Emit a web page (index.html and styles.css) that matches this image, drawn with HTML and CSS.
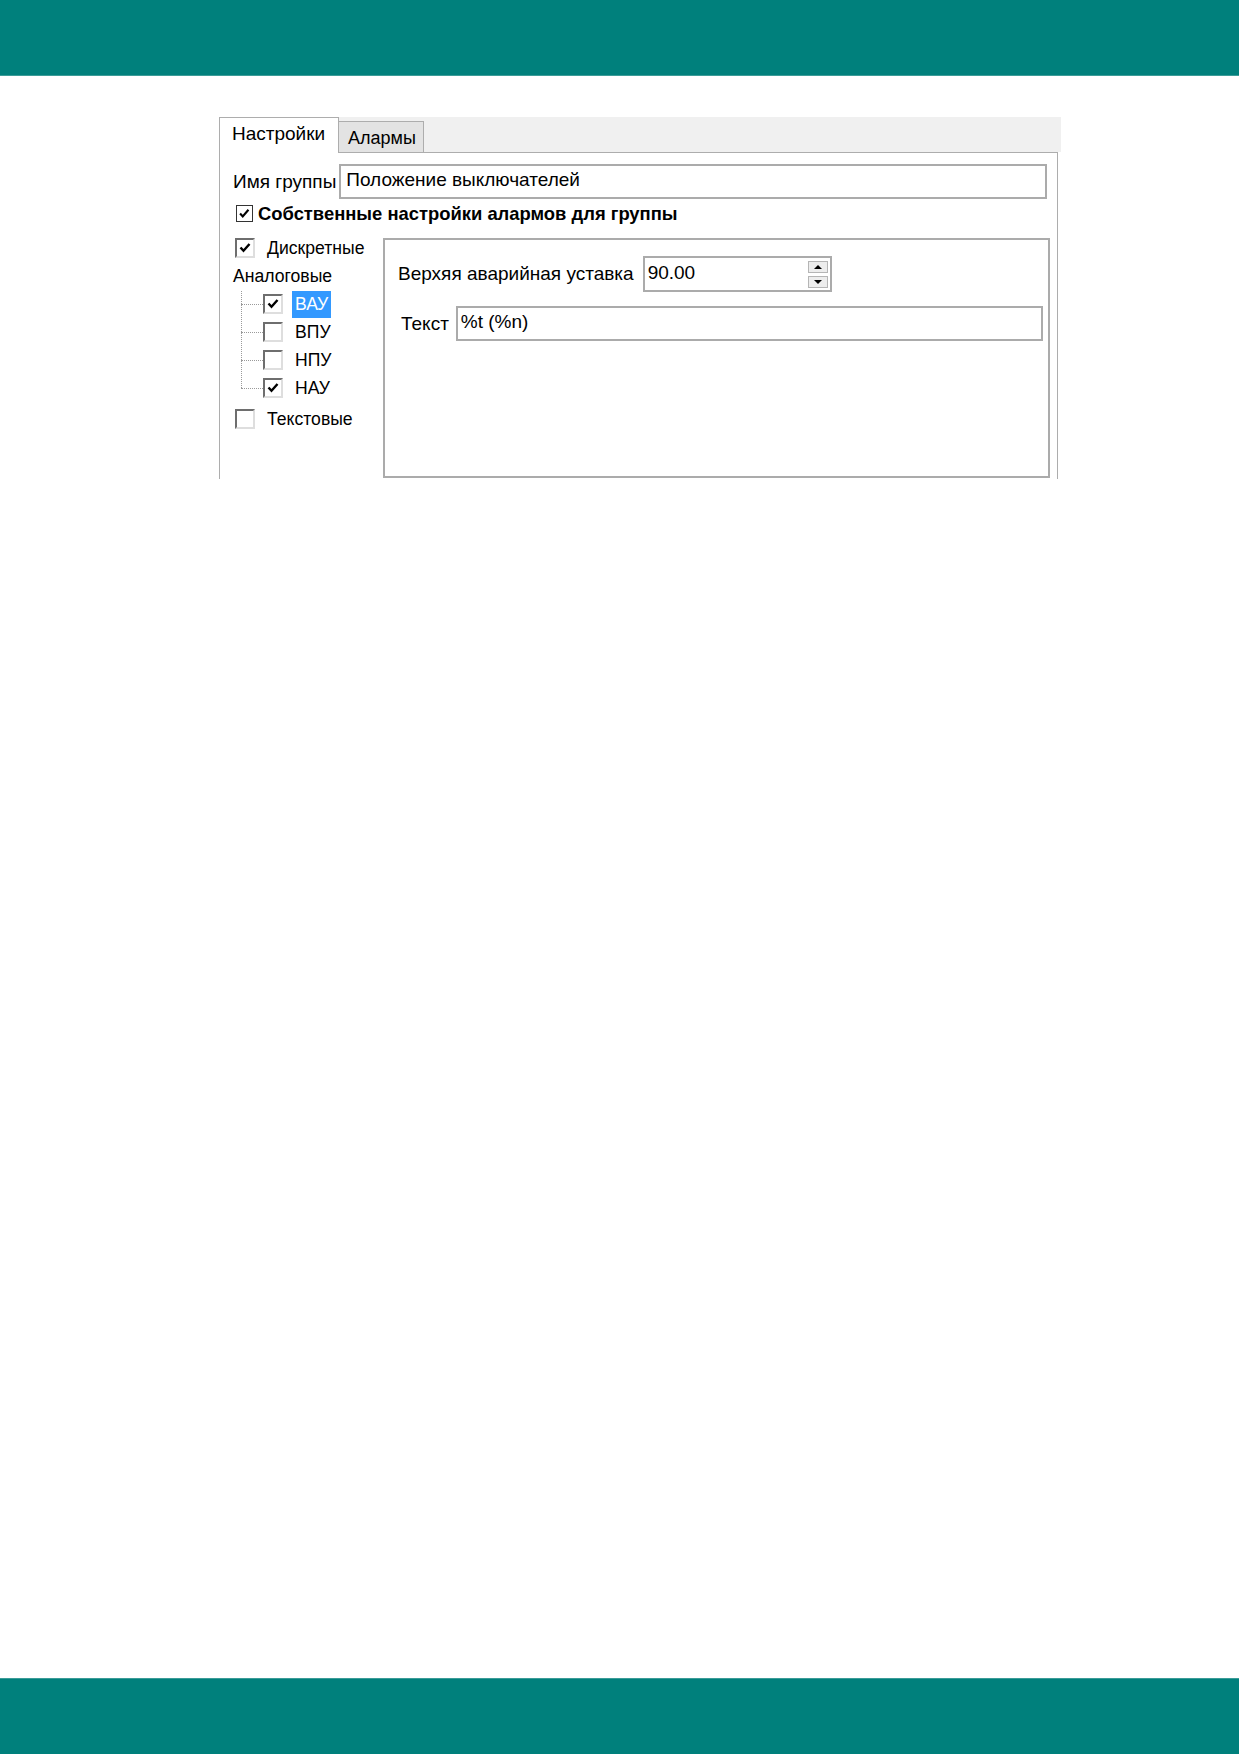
FILE: index.html
```html
<!DOCTYPE html>
<html lang="ru">
<head>
<meta charset="utf-8">
<title>Настройки группы</title>
<link rel="stylesheet" href="styles.css">
</head>
<body>
<div class="page">
  <header class="topbar"></header>

  <main class="content">
    <div class="dialog">
      <div class="tabs">
        <div class="tab tab-active">Настройки</div>
        <div class="tab tab-idle">Алармы</div>
      </div>

      <div class="panel">
        <div class="row-name">
          <span class="label">Имя группы</span>
          <div class="field field-name">Положение выключателей</div>
        </div>

        <div class="row-own">
          <span class="cb-flat">
            <svg viewBox="0 0 17 17" width="15" height="15"><path d="M3.5 8.5 L6.5 11.8 L13 4.2" fill="none" stroke="#000" stroke-width="2.4"/></svg>
          </span>
          <span class="own-text">Собственные настройки алармов для группы</span>
        </div>

        <div class="row-body">
          <div class="kinds">
            <div class="kind-row">
              <span class="cb-3d">
                <svg viewBox="0 0 16 16" width="16" height="16"><path d="M3.5 7.5 L6.5 10.8 L12.5 4" fill="none" stroke="#000" stroke-width="2.4"/></svg>
              </span>
              <span class="kind-label">Дискретные</span>
            </div>

            <div class="kind-title">Аналоговые</div>

            <ul class="tree">
              <li class="tree-row">
                <span class="tree-link"></span>
                <span class="cb-3d">
                  <svg viewBox="0 0 16 16" width="16" height="16"><path d="M3.5 7.5 L6.5 10.8 L12.5 4" fill="none" stroke="#000" stroke-width="2.4"/></svg>
                </span>
                <span class="tree-label tree-label-selected">ВАУ</span>
              </li>
              <li class="tree-row">
                <span class="tree-link"></span>
                <span class="cb-3d"></span>
                <span class="tree-label">ВПУ</span>
              </li>
              <li class="tree-row">
                <span class="tree-link"></span>
                <span class="cb-3d"></span>
                <span class="tree-label">НПУ</span>
              </li>
              <li class="tree-row">
                <span class="tree-link"></span>
                <span class="cb-3d">
                  <svg viewBox="0 0 16 16" width="16" height="16"><path d="M3.5 7.5 L6.5 10.8 L12.5 4" fill="none" stroke="#000" stroke-width="2.4"/></svg>
                </span>
                <span class="tree-label">НАУ</span>
              </li>
            </ul>

            <div class="kind-row kind-row-last">
              <span class="cb-3d"></span>
              <span class="kind-label">Текстовые</span>
            </div>
          </div>

          <div class="groupbox">
            <div class="row-limit">
              <span class="label">Верхяя аварийная уставка</span>
              <div class="spinbox">
                <span class="spin-value">90.00</span>
                <span class="spin-buttons">
                  <span class="spin-btn"><span class="arrow-up"></span></span>
                  <span class="spin-btn"><span class="arrow-down"></span></span>
                </span>
              </div>
            </div>
            <div class="row-text">
              <span class="label">Текст</span>
              <div class="field field-text">%t (%n)</div>
            </div>
          </div>
        </div>
      </div>
    </div>
  </main>

  <footer class="bottombar"></footer>
</div>
</body>
</html>
```

FILE: styles.css
```css
* {
  box-sizing: border-box;
}

html, body {
  margin: 0;
  padding: 0;
  background: #fff;
}

body {
  font-family: "Liberation Sans", Arial, sans-serif;
  color: #000;
}

.page {
  display: flex;
  flex-direction: column;
  width: 1239px;
  height: 1754px;
}

/* coloured page bands */
.topbar {
  height: 76px;
  background: #00807c;
  border-bottom: 1px solid #3b9c98;
  flex: none;
}

.bottombar {
  margin-top: auto;
  height: 76px;
  background: #00807c;
  border-top: 1px solid #3b9c98;
  flex: none;
}

.content {
  padding: 41px 0 0 219px;
}

/* dialog window */
.dialog {
  width: 842px;
  height: 362px;
  overflow: hidden;
}

.tabs {
  display: flex;
  align-items: flex-end;
  height: 35px;
  background: #f0f0f0;
}

.tab {
  font-size: 19px;
  display: flex;
  align-items: center;
}

.tab-active {
  position: relative;
  z-index: 1;
  width: 120px;
  height: 36px;
  margin-bottom: -1px;
  padding: 0 0 3px 12px;
  background: #fff;
  border: 1px solid #adadad;
  border-bottom: none;
}

.tab-idle {
  width: 85px;
  height: 31px;
  padding: 2px 0 0 9px;
  font-size: 18px;
  background: #e3e3e3;
  border-top: 1px solid #adadad;
  border-right: 1px solid #adadad;
}

.panel {
  width: 839px;
  height: 340px;
  padding: 11px 10px 0 13px;
  background: #fff;
  border: 1px solid #adadad;
  border-bottom: none;
}

.label {
  font-size: 19px;
  white-space: nowrap;
}

.field {
  height: 35px;
  border: 2px solid #ababab;
  background: #fff;
  font-size: 19px;
  display: flex;
  align-items: center;
  white-space: nowrap;
}

.row-name {
  display: flex;
  align-items: center;
  gap: 3px;
}

.field-name {
  flex: 1;
  padding: 0 0 3px 5px;
}

.row-own {
  display: flex;
  align-items: center;
  height: 17px;
  margin-top: 6px;
  padding-left: 3px;
}

.cb-flat {
  width: 17px;
  height: 17px;
  border: 1px solid #333;
  background: #fff;
  display: flex;
  align-items: center;
  justify-content: center;
  flex: none;
}

.own-text {
  margin-left: 5px;
  font-size: 18.4px;
  font-weight: bold;
  white-space: nowrap;
}

.row-body {
  display: flex;
  margin-top: 16px;
}

/* list of alarm kinds on the left */
.kinds {
  width: 150px;
  flex: none;
  font-size: 17.6px;
}

.cb-3d {
  width: 20px;
  height: 20px;
  flex: none;
  border: 2px solid;
  border-color: #6e6e6e #dedede #dedede #6e6e6e;
  background: #fff;
  display: flex;
  align-items: center;
  justify-content: center;
}

.kind-row {
  display: flex;
  align-items: center;
  height: 20px;
  padding-left: 2px;
}

.kind-row-last {
  margin-top: 11px;
}

.kind-label {
  margin-left: 12px;
  white-space: nowrap;
}

.kind-title {
  margin-top: 8px;
  height: 20px;
  line-height: 20px;
  white-space: nowrap;
}

.tree {
  position: relative;
  list-style: none;
  margin: 8px 0 0 0;
  padding: 0;
  display: flex;
  flex-direction: column;
  gap: 8px;
}

/* vertical dotted connector of the tree */
.tree::before {
  content: "";
  position: absolute;
  left: 8px;
  top: -3px;
  bottom: 10px;
  border-left: 1px dotted #9a9a9a;
}

.tree-row {
  display: flex;
  align-items: center;
  height: 20px;
  padding-left: 8px;
}

.tree-link {
  width: 22px;
  border-top: 1px dotted #9a9a9a;
  flex: none;
}

.tree-label {
  margin-left: 9px;
  padding: 0 3px;
  line-height: 27px;
  white-space: nowrap;
}

.tree-label-selected {
  background: #3399ff;
  color: #fff;
}

/* alarm settings group on the right */
.groupbox {
  width: 667px;
  height: 240px;
  margin-right: -3px;
  border: 2px solid #ababab;
  padding: 16px 5px 0 13px;
}

.row-limit {
  display: flex;
  align-items: center;
}

.spinbox {
  margin-left: 9px;
  width: 189px;
  height: 36px;
  border: 2px solid #ababab;
  display: flex;
  align-items: center;
  justify-content: space-between;
  padding: 0 2px 0 3px;
}

.spin-value {
  font-size: 19px;
  padding-bottom: 3px;
}

.spin-buttons {
  display: flex;
  flex-direction: column;
  gap: 3px;
}

.spin-btn {
  width: 20px;
  height: 12px;
  border: 1px solid #b5b5b5;
  background: #ededed;
  display: flex;
  align-items: center;
  justify-content: center;
}

.arrow-up {
  width: 0;
  height: 0;
  border-left: 4px solid transparent;
  border-right: 4px solid transparent;
  border-bottom: 4px solid #000;
}

.arrow-down {
  width: 0;
  height: 0;
  border-left: 4px solid transparent;
  border-right: 4px solid transparent;
  border-top: 4px solid #000;
}

.row-text {
  display: flex;
  align-items: center;
  margin-top: 14px;
  padding-left: 3px;
}

.field-text {
  flex: 1;
  margin-left: 7px;
  padding: 0 0 3px 3px;
}
```
